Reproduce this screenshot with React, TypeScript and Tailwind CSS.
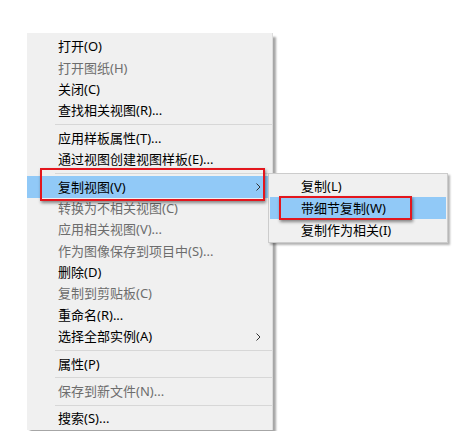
import React from "react";

type Entry =
  | { sep: true }
  | { label: string; off?: boolean; hot?: boolean; sub?: boolean };

const items: Entry[] = [
  { label: "打开(O)" },
  { label: "打开图纸(H)", off: true },
  { label: "关闭(C)" },
  { label: "查找相关视图(R)..." },
  { sep: true },
  { label: "应用样板属性(T)..." },
  { label: "通过视图创建视图样板(E)..." },
  { sep: true },
  { label: "复制视图(V)", hot: true, sub: true },
  { label: "转换为不相关视图(C)", off: true },
  { label: "应用相关视图(V)...", off: true },
  { label: "作为图像保存到项目中(S)...", off: true },
  { label: "删除(D)" },
  { label: "复制到剪贴板(C)", off: true },
  { label: "重命名(R)..." },
  { label: "选择全部实例(A)", sub: true },
  { sep: true },
  { label: "属性(P)" },
  { sep: true },
  { label: "保存到新文件(N)...", off: true },
  { sep: true },
  { label: "搜索(S)..." },
];

const subItems = [
  { label: "复制(L)" },
  { label: "带细节复制(W)", hot: true },
  { label: "复制作为相关(I)" },
];

function Chevron() {
  return (
    <svg width="5" height="8" viewBox="0 0 5 8" className="shrink-0">
      <polyline points="0.5,0.5 4,4 0.5,7.5" fill="none" stroke="#333" strokeWidth="1" />
    </svg>
  );
}

export default function App() {
  return (
    <div
      className="relative w-[457px] h-[431px] overflow-hidden bg-white text-[13px] text-black"
      style={{ fontFamily: '"Noto Sans", "Noto Sans CJK SC", sans-serif' }}
    >
      {/* main context menu */}
      <div className="ml-[27px] mt-[33px] w-[246px] bg-[#f0f0f0] pt-[3px] border-r border-[#dcdcdc] shadow-[3px_4px_2px_rgba(0,0,0,0.35)]">
        {items.map((it, i) =>
          "sep" in it ? (
            <div key={i} className="h-[6px] flex items-center pl-[28px]">
              <div className="h-px w-full bg-[#d7d7d7]" />
            </div>
          ) : (
            <div
              key={i}
              className={`h-[21.4px] flex items-center pl-[31px] pr-[11px] leading-none ${
                it.hot ? "bg-[#91c9f7]" : ""
              } ${it.off ? "text-[#6d6d6d]" : "text-black"}`}
            >
              <span className="flex-1 whitespace-nowrap">{it.label}</span>
              {it.sub && <Chevron />}
            </div>
          )
        )}
      </div>

      {/* submenu */}
      <div className="absolute left-[268px] top-[173px] w-[180px] bg-[#f0f0f0] border border-[#cccccc] p-[1px] shadow-[2px_2px_2px_rgba(0,0,0,0.3)]">
        {subItems.map((it, i) => (
          <div
            key={i}
            className={`h-[22px] flex items-center pl-[31px] leading-none whitespace-nowrap ${
              it.hot ? "bg-[#91c9f7]" : ""
            }`}
          >
            {it.label}
          </div>
        ))}
      </div>

      {/* red annotation boxes */}
      <div className="absolute left-[40px] top-[168px] w-[225px] h-[33px] border-2 border-[#e3161d] shadow-[1px_2px_3px_rgba(0,0,0,0.45)]" />
      <div className="absolute left-[279px] top-[196px] w-[133px] h-[24px] border-2 border-[#e3161d] shadow-[1px_2px_3px_rgba(0,0,0,0.45)]" />
    </div>
  );
}
